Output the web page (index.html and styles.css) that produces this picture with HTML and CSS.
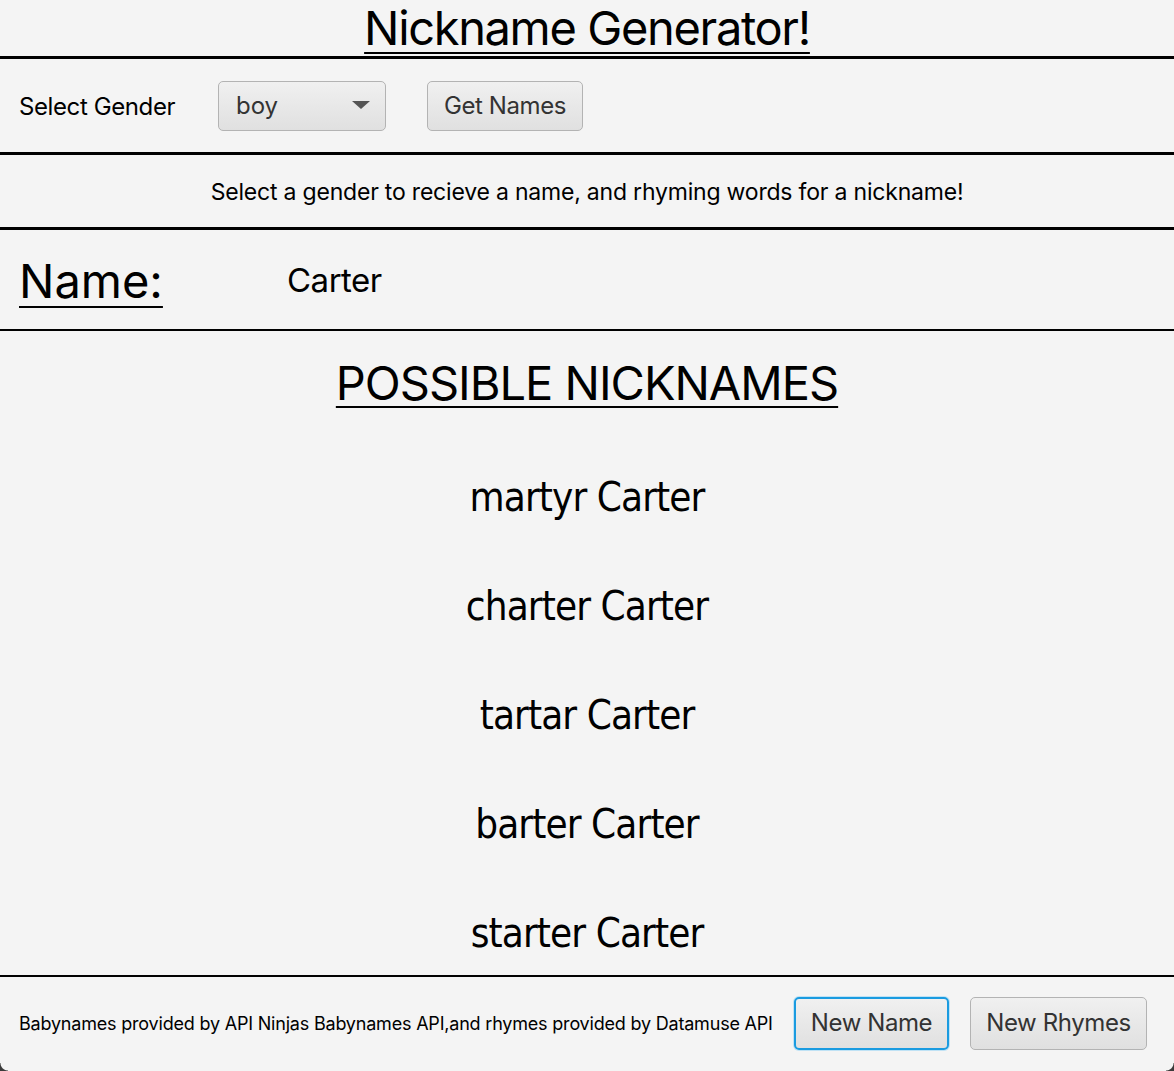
FILE: index.html
```html
<!DOCTYPE html>
<html>
<head>
<meta charset="utf-8">
<link rel="stylesheet" href="styles.css">
</head>
<body>
<div class="app">
  <header class="header">
    <h1 class="title">Nickname Generator!</h1>
  </header>
  <section class="controls">
    <span class="label">Select Gender</span>
    <div class="combo">
      <span class="combo-value">boy</span>
      <span class="combo-arrow"></span>
    </div>
    <button class="btn btn-get">Get Names</button>
  </section>
  <section class="info">
    <p class="info-text">Select a gender to recieve a name, and rhyming words for a nickname!</p>
  </section>
  <section class="name-row">
    <span class="name-label">Name:</span>
    <span class="name-value">Carter</span>
  </section>
  <main class="nicknames">
    <h2 class="nick-title">POSSIBLE NICKNAMES</h2>
    <ul class="nick-list">
      <li class="nick">martyr Carter</li>
      <li class="nick">charter Carter</li>
      <li class="nick">tartar Carter</li>
      <li class="nick">barter Carter</li>
      <li class="nick">starter Carter</li>
    </ul>
  </main>
  <footer class="footer">
    <span class="credits">Babynames provided by API Ninjas Babynames API,and rhymes provided by Datamuse API</span>
    <button class="btn btn-focus btn-new-name">New Name</button>
    <button class="btn btn-new-rhymes">New Rhymes</button>
  </footer>
  <span class="corner corner-left"></span>
  <span class="corner corner-right"></span>
</div>
</body>
</html>
```
FILE: styles.css
```css
* { box-sizing: border-box; }
html, body {
  margin: 0;
  padding: 0;
  background: #f4f4f4;
}
body {
  font-family: Inter, "Liberation Sans", sans-serif;
  color: #000;
}
.app {
  position: relative;
  width: 1174px;
  height: 1071px;
  display: flex;
  flex-direction: column;
  overflow: hidden;
}
.header {
  height: 59px;
  border-bottom: 3px solid #000;
  display: flex;
  justify-content: center;
}
.title {
  margin: 0;
  font-weight: 400;
  font-size: 47px;
  line-height: 56px;
  letter-spacing: -1.35px;
  text-decoration: underline;
  text-decoration-thickness: 2px;
  text-underline-offset: 7px;
}
.controls {
  height: 96px;
  border-bottom: 3px solid #000;
  display: flex;
  align-items: center;
  padding-left: 19px;
  padding-top: 1px;
}
.label {
  font-size: 24px;
  letter-spacing: -0.4px;
  width: 199px;
}
.combo {
  width: 168px;
  height: 50px;
  border: 1.5px solid #b3b3b3;
  border-radius: 5px;
  background: linear-gradient(#f0f0f0, #e0e0e0);
  display: flex;
  align-items: center;
  justify-content: space-between;
  padding: 0 15px 0 17px;
}
.combo-value {
  font-size: 24px;
  color: #333;
  padding-bottom: 2px;
}
.combo-arrow {
  width: 0;
  height: 0;
  border-left: 9px solid transparent;
  border-right: 9px solid transparent;
  border-top: 8px solid #555;
  margin-bottom: 2px;
}
.btn {
  font-family: Inter, "Liberation Sans", sans-serif;
  font-size: 24px;
  color: #333;
  height: 50px;
  border: 1.5px solid #b3b3b3;
  border-radius: 5px;
  background: linear-gradient(#f0f0f0, #e0e0e0);
  padding: 0 0 2px 0;
  letter-spacing: -0.4px;
}
.btn-get {
  margin-left: 41px;
  width: 156px;
}
.info {
  height: 75px;
  border-bottom: 3px solid #000;
  display: flex;
  align-items: center;
  justify-content: center;
}
.info-text {
  margin: 0;
  font-size: 23px;
  letter-spacing: -0.2px;
  padding-top: 2px;
}
.name-row {
  height: 101px;
  border-bottom: 2px solid #000;
  display: flex;
  align-items: center;
  padding-left: 19px;
}
.name-label {
  font-size: 47px;
  width: 268px;
  text-decoration: underline;
  text-decoration-thickness: 2px;
  text-underline-offset: 8px;
  letter-spacing: 0;
  padding-top: 2px;
}
.name-value {
  font-size: 33px;
  letter-spacing: -0.5px;
}
.nicknames {
  height: 646px;
  border-bottom: 2px solid #000;
  display: flex;
  flex-direction: column;
  align-items: center;
}
.nick-title {
  margin: 24px 0 0 0;
  font-weight: 400;
  font-size: 47px;
  line-height: 56px;
  letter-spacing: -1px;
  text-decoration: underline;
  text-decoration-thickness: 2px;
  text-underline-offset: 6px;
}
.nick-list {
  list-style: none;
  margin: 62px 0 0 0;
  padding: 0;
  display: flex;
  flex-direction: column;
  align-items: center;
  gap: 61px;
}
.nick {
  font-family: "DejaVu Sans Condensed", "DejaVu Sans", sans-serif;
  font-stretch: condensed;
  font-size: 40px;
  line-height: 48px;
  letter-spacing: -0.9px;
}
.footer {
  flex: 1;
  display: flex;
  align-items: center;
  padding-left: 19px;
  padding-bottom: 2px;
}
.credits {
  font-size: 18px;
  letter-spacing: -0.2px;
  width: 775px;
}
.btn-new-name {
  width: 155px;
  height: 53px;
  border: 2px solid #1a9be0;
  box-shadow: 0 0 0 1px #bfe2f5;
}
.btn-new-rhymes {
  margin-left: 21px;
  width: 177px;
  height: 53px;
}
.corner {
  position: absolute;
  bottom: 0;
  width: 8px;
  height: 8px;
}
.corner-left {
  left: 0;
  background: radial-gradient(circle at 100% 0, transparent 7px, #3a3a3a 8px);
}
.corner-right {
  right: 0;
  background: radial-gradient(circle at 0 0, transparent 7px, #3a3a3a 8px);
}
```
